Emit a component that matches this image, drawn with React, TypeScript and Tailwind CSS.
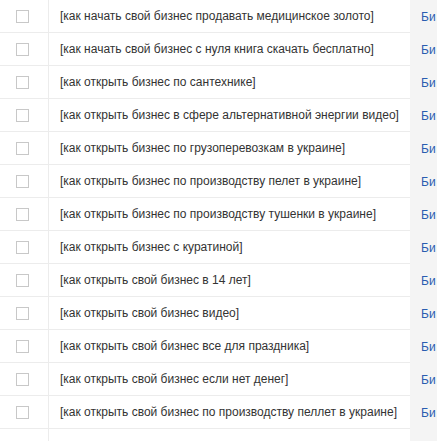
const ROWS = [
  '[как начать свой бизнес продавать медицинское золото]',
  '[как начать свой бизнес с нуля книга скачать бесплатно]',
  '[как открыть бизнес по сантехнике]',
  '[как открыть бизнес в сфере альтернативной энергии видео]',
  '[как открыть бизнес по грузоперевозкам в украине]',
  '[как открыть бизнес по производству пелет в украине]',
  '[как открыть бизнес по производству тушенки в украине]',
  '[как открыть бизнес с куратиной]',
  '[как открыть свой бизнес в 14 лет]',
  '[как открыть свой бизнес видео]',
  '[как открыть свой бизнес все для праздника]',
  '[как открыть свой бизнес если нет денег]',
  '[как открыть свой бизнес по производству пеллет в украине]',
];

export default function App() {
  return (
    <div className="w-[437px] h-[441px] overflow-hidden bg-white font-['Liberation_Sans',Arial,sans-serif] text-[12px] text-[#333]">
      {[...ROWS, ''].map((text, i) => (
        <div key={i} className="flex h-[33px]">
          <div className="w-[49px] shrink-0 flex items-center border-r border-[#ececec] border-b pl-4">
            {text && <span className="w-[13px] h-[13px] border border-[#c8c8c8] bg-white" />}
          </div>
          <div className="w-[361px] shrink-0 flex items-center border-b border-[#ececec] pl-[11px] whitespace-nowrap overflow-hidden">
            {text}
          </div>
          <div className="flex-1 bg-[#f4f4f4] flex items-center pl-[11px] text-[#2a5db0] whitespace-nowrap overflow-hidden">
            {text && 'Би'}
          </div>
        </div>
      ))}
    </div>
  );
}
